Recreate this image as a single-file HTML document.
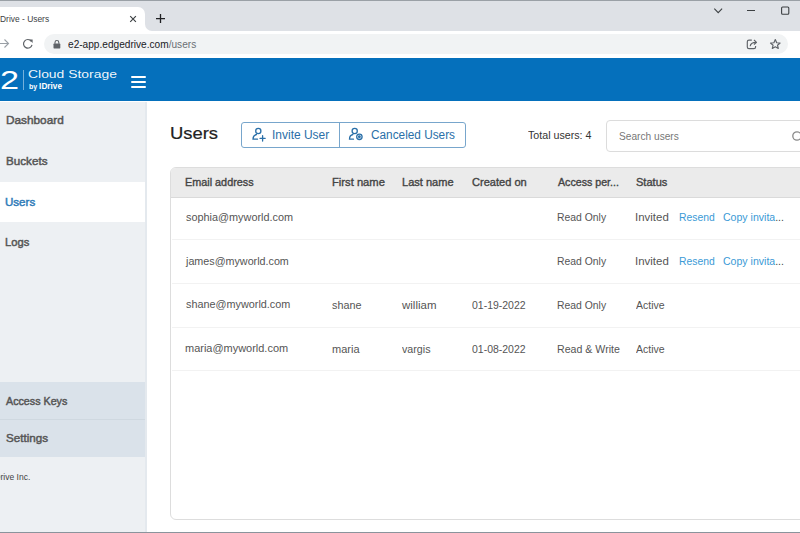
<!DOCTYPE html>
<html><head><meta charset="utf-8">
<style>
*{margin:0;padding:0;box-sizing:border-box}
html,body{width:800px;height:533px;overflow:hidden;background:#fff;font-family:"Liberation Sans",sans-serif;position:relative}
.a{position:absolute}
.bp{display:inline-block;width:0;height:0}
.t{position:absolute;white-space:nowrap;line-height:1;transform-origin:0 0}
</style></head><body>
<!-- tab strip -->
<div class="a" style="left:0;top:0;width:800px;height:31px;background:#dee1e6"></div>
<div class="a" style="left:0;top:0;width:800px;height:1px;background:#9aa0a6"></div>
<div class="a" style="left:-20px;top:6.5px;width:165px;height:25px;background:#fff;border-radius:7px 7px 0 0"></div>
<div class="a" style="left:144px;top:24px;width:8px;height:7px;background:#fff"></div>
<div class="a" style="left:145px;top:17px;width:14px;height:14px;background:#dee1e6;border-radius:50%"></div>
<svg class="a" style="left:0;top:0" width="800" height="57" viewBox="0 0 800 57">
  <!-- tab close -->
  <path d="M130.2 16.1 L135.9 21.8 M135.9 16.1 L130.2 21.8" stroke="#3c4043" stroke-width="1.15" fill="none"/>
  <!-- new tab plus -->
  <path d="M156 18.6 H165 M160.5 14 V23" stroke="#202124" stroke-width="1.3" fill="none"/>
  <!-- chevron -->
  <path d="M714.3 8.7 L718.2 12.6 L722.1 8.7" stroke="#3c4043" stroke-width="1.1" fill="none"/>
  <!-- minimize -->
  <path d="M747 10.5 H755" stroke="#3c4043" stroke-width="1" fill="none"/>
  <!-- maximize -->
  <rect x="781.6" y="7" width="7.2" height="7.3" rx="1" stroke="#3c4043" stroke-width="1.1" fill="none"/>
  <!-- forward arrow -->
  <path d="M-1 43.5 H8.5 M4.5 39.5 L8.5 43.5 L4.5 47.5" stroke="#9aa0a6" stroke-width="1.1" fill="none"/>
  <!-- reload -->
  <path d="M31.3 41.3 A4.3 4.3 0 1 0 32 44.8" stroke="#5f6368" stroke-width="1.2" fill="none"/>
  <path d="M29.2 39.6 L32.6 39.6 L32.6 43 Z" fill="#5f6368"/>
</svg>
<!-- address bar -->
<div class="a" style="left:44px;top:34.2px;width:744px;height:19.8px;background:#f1f3f4;border-radius:10px"></div>
<svg class="a" style="left:0;top:0" width="800" height="57" viewBox="0 0 800 57">
  <!-- lock -->
  <rect x="53.5" y="43.6" width="6.8" height="4.8" rx="0.6" fill="#5f6368"/>
  <path d="M55 43.8 V42.4 A1.9 1.9 0 0 1 58.8 42.4 V43.8" stroke="#5f6368" stroke-width="1.1" fill="none"/>
  <!-- share -->
  <path d="M751.8 40.1 H749 Q747.3 40.1 747.3 41.8 V46.9 Q747.3 48.6 749 48.6 H753.9 Q755.6 48.6 755.6 46.9 V45.9" stroke="#5f6368" stroke-width="1.15" fill="none"/>
  <path d="M750.2 46.3 C750.4 43.6 752.4 42.3 756.2 42.3 M754 40 L756.5 42.3 L754 44.6" stroke="#5f6368" stroke-width="1.15" fill="none" stroke-linejoin="round"/>
  <!-- star -->
  <path d="M775.3 39.5 L776.7 42.7 L780.1 43 L777.5 45.2 L778.3 48.5 L775.3 46.8 L772.3 48.5 L773.1 45.2 L770.5 43 L773.9 42.7 Z" stroke="#5f6368" stroke-width="1.15" fill="none" stroke-linejoin="round"/>
</svg>

<!-- blue header -->
<div class="a" style="left:0;top:57.8px;width:800px;height:43px;background:#0570bc"></div>
<div class="a" style="left:23px;top:69.7px;width:1px;height:20px;background:rgba(255,255,255,.45)"></div>
<div class="a" style="left:131px;top:75.5px;width:15px;height:2px;background:#fff;border-radius:1px"></div>
<div class="a" style="left:131px;top:80.5px;width:15px;height:2px;background:#fff;border-radius:1px"></div>
<div class="a" style="left:131px;top:85.5px;width:15px;height:2px;background:#fff;border-radius:1px"></div>

<!-- sidebar -->
<div class="a" style="left:0;top:101.6px;width:145px;height:431px;background:#edf0f3"></div>
<div class="a" style="left:145px;top:101.6px;width:2px;height:431px;background:#e4e9ee"></div>
<div class="a" style="left:0;top:181.5px;width:145px;height:40.5px;background:#fff"></div>
<div class="a" style="left:0;top:382px;width:145px;height:75px;background:#dae2ea"></div>
<div class="a" style="left:0;top:419px;width:145px;height:1px;background:#cfd8e0"></div>

<!-- main -->
<div class="a" style="left:240.5px;top:121.7px;width:225.5px;height:26px;border:1px solid #78a6cc;border-radius:3px"></div>
<div class="a" style="left:339px;top:121.7px;width:1px;height:26px;background:#78a6cc"></div>
<svg class="a" style="left:0;top:0" width="800" height="533" viewBox="0 0 800 533">
  <g stroke="#2a6fa8" stroke-width="1.3" fill="none" stroke-linecap="round">
    <circle cx="258.3" cy="131" r="2.6"/>
    <path d="M256.5 134.5 C254 135 253 137 253 139.2 H257.5"/>
    <path d="M260 138.3 H265.2 M262.6 135.7 V141"/>
    <circle cx="354.7" cy="131" r="2.6"/>
    <path d="M352.9 134.5 C350.4 135 349.5 137 349.5 139.2 H353.5"/>
    <circle cx="359.4" cy="136.8" r="2.7"/>
    <circle cx="359.4" cy="136.8" r="0.8"/>
  </g>
</svg>
<div class="a" style="left:605.5px;top:120px;width:220px;height:31.5px;border:1px solid #dcdcdc;border-radius:4px"></div>
<svg class="a" style="left:0;top:0" width="800" height="533" viewBox="0 0 800 533">
  <circle cx="797" cy="136" r="4.2" stroke="#888" stroke-width="1.3" fill="none"/>
</svg>

<!-- table -->
<div class="a" style="left:170px;top:166.5px;width:700px;height:353px;border:1px solid #dddddd;border-radius:6px;overflow:hidden">
  <div class="a" style="left:0;top:0;width:700px;height:30px;background:#ebebeb;border-bottom:1px solid #dadada"></div>
</div>
<div class="a" style="left:172px;top:238.5px;width:628px;height:1px;background:#f2f2f2"></div>
<div class="a" style="left:172px;top:282.5px;width:628px;height:1px;background:#f2f2f2"></div>
<div class="a" style="left:172px;top:326.5px;width:628px;height:1px;background:#f2f2f2"></div>
<div class="a" style="left:172px;top:370.3px;width:628px;height:1px;background:#f2f2f2"></div>





<div class="t" id="tab" style="left:-0.36px;top:14.70px;font-size:9px;color:#3c4043;transform:scaleX(0.9359);"><i class="bp"></i><span style="position:absolute;right:100%">I</span>Drive - Users</div>
<div class="t" id="url" style="left:68.25px;top:39.90px;font-size:10px;color:#202124;transform:scaleX(1.0115);"><i class="bp"></i>e2-app.edgedrive.com<span style="color:#6b7075">/users</span></div>
<div class="t" id="two" style="left:0.22px;top:66.90px;font-size:26px;color:#ffffff;transform:scaleX(1.3167);"><i class="bp"></i>2</div>
<div class="t" id="cloud" style="left:27.84px;top:69.41px;font-size:10.6px;color:rgba(255,255,255,0.95);transform:scaleX(1.3124);"><i class="bp"></i>Cloud Storage</div>
<div class="t" id="by" style="left:29.07px;top:81.50px;font-size:8.6px;color:#ffffff;font-weight:700;transform:scaleX(0.9570);"><i class="bp"></i><span style="font-size:7.3px">by </span>IDrive</div>
<div class="t" id="dash" style="left:5.61px;top:115.31px;font-size:11px;color:#555555;-webkit-text-stroke:0.45px #555555;transform:scaleX(1.0730);"><i class="bp"></i>Dashboard</div>
<div class="t" id="buck" style="left:5.62px;top:155.91px;font-size:11px;color:#555555;-webkit-text-stroke:0.45px #555555;transform:scaleX(1.0597);"><i class="bp"></i>Buckets</div>
<div class="t" id="susr" style="left:5.42px;top:196.60px;font-size:11px;color:#2e7bb8;-webkit-text-stroke:0.45px #2e7bb8;transform:scaleX(1.0500);"><i class="bp"></i>Users</div>
<div class="t" id="logs" style="left:5.44px;top:237.00px;font-size:11px;color:#555555;-webkit-text-stroke:0.45px #555555;transform:scaleX(1.0174);"><i class="bp"></i>Logs</div>
<div class="t" id="akey" style="left:6.44px;top:396.00px;font-size:11px;color:#555555;-webkit-text-stroke:0.45px #555555;transform:scaleX(0.9739);"><i class="bp"></i>Access Keys</div>
<div class="t" id="sett" style="left:5.94px;top:433.21px;font-size:11px;color:#555555;-webkit-text-stroke:0.45px #555555;transform:scaleX(1.0557);"><i class="bp"></i>Settings</div>
<div class="t" id="inc" style="right:769.75px;top:473.01px;font-size:8.5px;color:#444;transform-origin:100% 0;"><i class="bp"></i>IDrive Inc.</div>
<div class="t" id="h1" style="left:169.99px;top:126.00px;font-size:16px;color:#222;-webkit-text-stroke:0.2px #222;transform:scaleX(1.1503);"><i class="bp"></i>Users</div>
<div class="t" id="inv" style="left:271.60px;top:128.51px;font-size:12px;color:#2a6fa8;transform:scaleX(0.9982);"><i class="bp"></i>Invite User</div>
<div class="t" id="can" style="left:370.81px;top:128.70px;font-size:12px;color:#2a6fa8;transform:scaleX(0.9840);"><i class="bp"></i>Canceled Users</div>
<div class="t" id="tot" style="left:528.25px;top:129.60px;font-size:10.8px;color:#333;transform:scaleX(0.9882);"><i class="bp"></i>Total users: 4</div>
<div class="t" id="srch" style="left:619.02px;top:131.00px;font-size:10.5px;color:#777;transform:scaleX(0.9672);"><i class="bp"></i>Search users</div>
<div class="t" id="th1" style="left:185.43px;top:177.00px;font-size:10.5px;color:#444444;-webkit-text-stroke:0.35px #444444;transform:scaleX(1.0312);"><i class="bp"></i>Email address</div>
<div class="t" id="th2" style="left:332.20px;top:177.00px;font-size:10.5px;color:#444444;-webkit-text-stroke:0.35px #444444;transform:scaleX(1.0670);"><i class="bp"></i>First name</div>
<div class="t" id="th3" style="left:401.71px;top:177.00px;font-size:10.5px;color:#444444;-webkit-text-stroke:0.35px #444444;transform:scaleX(1.0521);"><i class="bp"></i>Last name</div>
<div class="t" id="th4" style="left:471.74px;top:177.00px;font-size:10.5px;color:#444444;-webkit-text-stroke:0.35px #444444;transform:scaleX(1.0537);"><i class="bp"></i>Created on</div>
<div class="t" id="th5" style="left:557.60px;top:177.00px;font-size:10.5px;color:#444444;-webkit-text-stroke:0.35px #444444;transform:scaleX(1.0126);"><i class="bp"></i>Access per...</div>
<div class="t" id="th6" style="left:635.74px;top:177.00px;font-size:10.5px;color:#444444;-webkit-text-stroke:0.35px #444444;transform:scaleX(1.0530);"><i class="bp"></i>Status</div>
<div class="t" id="r0em" style="left:185.69px;top:212.10px;font-size:10.6px;color:#555555;transform:scaleX(1.0257);"><i class="bp"></i>sophia@myworld.com</div>
<div class="t" id="r0ac" style="left:556.57px;top:212.10px;font-size:10.6px;color:#555555;transform:scaleX(0.9816);"><i class="bp"></i>Read Only</div>
<div class="t" id="r0st" style="left:634.83px;top:212.10px;font-size:10.6px;color:#555555;transform:scaleX(1.0824);"><i class="bp"></i>Invited</div>
<div class="t" id="r0rs" style="left:679.42px;top:212.10px;font-size:10.6px;color:#3a9ad6;transform:scaleX(0.9771);"><i class="bp"></i>Resend</div>
<div class="t" id="r0cp" style="left:723.45px;top:212.10px;font-size:10.6px;color:#3a9ad6;transform:scaleX(0.9958);"><i class="bp"></i>Copy invita<span style="color:#444">...</span></div>
<div class="t" id="r1em" style="left:186.45px;top:256.01px;font-size:10.6px;color:#555555;transform:scaleX(1.0139);"><i class="bp"></i>james@myworld.com</div>
<div class="t" id="r1ac" style="left:556.57px;top:256.01px;font-size:10.6px;color:#555555;transform:scaleX(0.9816);"><i class="bp"></i>Read Only</div>
<div class="t" id="r1st" style="left:634.83px;top:256.01px;font-size:10.6px;color:#555555;transform:scaleX(1.0824);"><i class="bp"></i>Invited</div>
<div class="t" id="r1rs" style="left:679.42px;top:256.01px;font-size:10.6px;color:#3a9ad6;transform:scaleX(0.9771);"><i class="bp"></i>Resend</div>
<div class="t" id="r1cp" style="left:723.45px;top:256.01px;font-size:10.6px;color:#3a9ad6;transform:scaleX(0.9958);"><i class="bp"></i>Copy invita<span style="color:#444">...</span></div>
<div class="t" id="r2em" style="left:185.74px;top:299.31px;font-size:10.6px;color:#555555;transform:scaleX(1.0228);"><i class="bp"></i>shane@myworld.com</div>
<div class="t" id="r2fn" style="left:332.25px;top:300.41px;font-size:10.6px;color:#555555;transform:scaleX(1.0195);"><i class="bp"></i>shane</div>
<div class="t" id="r2ln" style="left:401.94px;top:300.41px;font-size:10.6px;color:#555555;transform:scaleX(1.0839);"><i class="bp"></i>william</div>
<div class="t" id="r2dt" style="left:471.90px;top:300.41px;font-size:10.6px;color:#555555;transform:scaleX(0.9888);"><i class="bp"></i>01-19-2022</div>
<div class="t" id="r2ac" style="left:556.57px;top:300.41px;font-size:10.6px;color:#555555;transform:scaleX(0.9816);"><i class="bp"></i>Read Only</div>
<div class="t" id="r2st" style="left:635.65px;top:300.41px;font-size:10.6px;color:#555555;transform:scaleX(0.9912);"><i class="bp"></i>Active</div>
<div class="t" id="r3em" style="left:185.22px;top:343.41px;font-size:10.6px;color:#555555;transform:scaleX(1.0351);"><i class="bp"></i>maria@myworld.com</div>
<div class="t" id="r3fn" style="left:331.72px;top:344.41px;font-size:10.6px;color:#555555;transform:scaleX(1.0408);"><i class="bp"></i>maria</div>
<div class="t" id="r3ln" style="left:401.95px;top:344.41px;font-size:10.6px;color:#555555;transform:scaleX(1.0090);"><i class="bp"></i>vargis</div>
<div class="t" id="r3dt" style="left:471.90px;top:344.41px;font-size:10.6px;color:#555555;transform:scaleX(0.9888);"><i class="bp"></i>01-08-2022</div>
<div class="t" id="r3ac" style="left:556.90px;top:344.41px;font-size:10.6px;color:#555555;transform:scaleX(1.0016);"><i class="bp"></i>Read &amp; Write</div>
<div class="t" id="r3st" style="left:635.65px;top:344.41px;font-size:10.6px;color:#555555;transform:scaleX(0.9912);"><i class="bp"></i>Active</div>
<!-- bottom window border -->
<div class="a" style="left:0;top:532px;width:800px;height:1px;background:#8a949c"></div>
</body></html>
